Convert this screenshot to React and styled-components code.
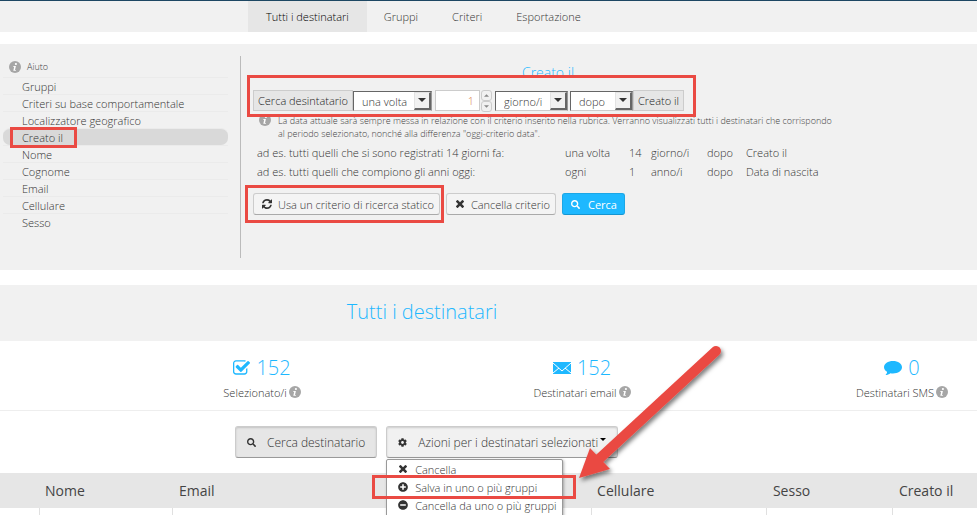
import React from "react";
import styled, { createGlobalStyle, css } from "styled-components";
import { FaSearch, FaCog, FaPlusCircle, FaMinusCircle } from "react-icons/fa";

// Styled Components

const GlobalStyle = createGlobalStyle`
  * {
    box-sizing: border-box;
  }
  body {
    margin: 0;
    overflow: hidden;
    background: #fff;
    color: #333;
    font-family: "Open Sans", "Liberation Sans", sans-serif;
    font-size: 11px;
    font-weight: 300;
  }
  button, input, select {
    font: inherit;
    color: inherit;
  }
  svg {
    display: block;
    flex: none;
  }
`;

const TopBar = styled.nav`
  display: flex;
  height: 32px;
  margin-bottom: 12px;
  padding-left: 248px;
  border-top: 1px solid #1d4763;
  background: #f1f1f1;
`;

const Tab = styled.a`
  display: flex;
  align-items: center;
  padding: 0 ${(props) => (props.$active ? "18px" : "17px")};
  text-decoration: none;
  color: ${(props) => (props.$active ? "#000" : "#333")};
  background: ${(props) => (props.$active ? "#e6e6e6" : "transparent")};
`;

const Panel = styled.section`
  display: flex;
  padding: 12px 0;
  background: #f1f1f1;
`;

const Sidebar = styled.aside`
  flex: none;
  width: 241px;
  padding: 0 12px 0 3px;
  border-right: 1px solid #bbb;
`;

const Help = styled.div`
  display: flex;
  align-items: center;
  gap: 6px;
  height: 21px;
  padding-left: 6px;
  font-size: 9px;
  color: #444;
`;

const CriteriaList = styled.ul`
  margin: 0;
  padding: 0 0 28px;
  list-style: none;
`;

const CriteriaItem = styled.li`
  display: flex;
  align-items: center;
  height: 17px;
  padding-left: 19px;
  border-top: 1px solid #ebebeb;
  border-radius: ${(props) => (props.$active ? "7px" : "0")};
  background: ${(props) => (props.$active ? "#d9d9d9" : "transparent")};

  a {
    color: #333;
    text-decoration: none;
  }
`;

// Red frame drawn over the marked element
const marked = css`
  position: relative;

  &::after {
    content: "";
    position: absolute;
    z-index: 5;
    inset: ${(props) => props.$frame};
    border: 3px solid #ea4a43;
    pointer-events: none;
  }
`;

const Marked = styled.div`
  ${marked}
`;

const Editor = styled.div`
  flex: 1;
  padding: 7px 12px 0;
`;

const EditorTitle = styled.h3`
  max-width: 590px;
  margin: 0;
  height: 27px;
  font-size: 14px;
  line-height: 20px;
  font-weight: 300;
  text-align: center;
  color: #1eb8ff;
`;

const CriteriaForm = styled.div`
  display: inline-flex;
  align-items: center;
  height: 21px;
  ${marked}
`;

const Addon = styled.span`
  display: flex;
  align-items: center;
  height: 21px;
  padding: 0 4px;
  border: 1px solid #ccc;
  background: #e6e6e6;
  color: #222;
`;

const SelectBox = styled.span`
  position: relative;
  display: flex;
  width: ${(props) => props.$width};
  height: 20px;
  margin-left: ${(props) => props.$gap || "0"};
  border: 1px solid #666;
  border-right-color: #999;
  border-bottom-color: #ccc;
  background: #fff;

  select {
    width: 100%;
    height: 18px;
    padding: 2px 18px 0 8px;
    border: 0;
    background: transparent;
    appearance: none;
    color: #333;
    line-height: 16px;
  }
`;

const SelectArrow = styled.span`
  position: absolute;
  top: 0;
  right: 0;
  display: flex;
  align-items: center;
  justify-content: center;
  width: 17px;
  height: 18px;
  border: 1px solid #e3e3e3;
  border-right: 2px solid #666;
  border-bottom: 2px solid #666;
  background: #f1f1f1;
  pointer-events: none;
`;

const NumberInput = styled.input`
  width: 45px;
  height: 21px;
  margin-left: 3px;
  padding: 0 5px;
  border: 1px solid #ccc;
  background: #fff;
  color: #d9824a;
  text-align: right;
`;

const Spinner = styled.span`
  display: flex;
  flex-direction: column;
  width: 11px;
  margin: 0 3px 0 1px;
`;

const SpinButton = styled.button`
  display: flex;
  align-items: center;
  justify-content: center;
  height: 11px;
  padding: 0;
  border: 1px solid #ccc;
  border-radius: 3px;
  background: #f1f1f1;
  color: #888;
`;

const Hint = styled.div`
  display: flex;
  gap: 7px;
  max-width: 590px;
  padding: 3px 0 0 6px;
  font-size: 9px;
  line-height: 13px;
  color: #444;

  p {
    margin: 0;
  }
`;

const Examples = styled.table`
  margin: 3px 0 12px 4px;
  border-collapse: collapse;

  td {
    height: 19px;
    padding: 0;
    white-space: nowrap;
  }
`;

const ExampleCell = styled.td`
  width: ${(props) => props.$width};
`;

const ButtonRow = styled.div`
  display: flex;
  gap: 6px;
`;

const Button = styled.button`
  display: flex;
  align-items: center;
  gap: ${(props) => (props.$primary ? "8px" : "6px")};
  height: 22px;
  padding: ${(props) => (props.$primary ? "0 7px 0 8px" : "0 5px 0 8px")};
  border: 1px solid ${(props) => (props.$primary ? "#1ca7e6" : "#ccc")};
  border-bottom-color: ${(props) => (props.$primary ? "#1595d0" : "#aaa")};
  border-radius: 3px;
  background: ${(props) => (props.$primary ? "#1eb8ff" : "#f4f4f4")};
  color: ${(props) => (props.$primary ? "#fff" : "#333")};
  font-weight: ${(props) => (props.$primary ? 400 : 300)};
  white-space: nowrap;
`;

const PageTitle = styled.h1`
  margin: 15px 0 0;
  padding: 0 133px 0 0;
  background: #f1f1f1;
  color: #1eb8ff;
  font-size: 20px;
  font-weight: 300;
  line-height: 54px;
  height: 56px;
  text-align: center;
`;

const Stats = styled.section`
  display: flex;
  justify-content: space-between;
  height: 70px;
  padding: 12px 25px 0 212px;
  border-bottom: 1px solid #eee;
`;

const Stat = styled.div`
  display: flex;
  flex-direction: column;
  align-items: center;
  width: 100px;
`;

const StatValue = styled.div`
  display: flex;
  align-items: center;
  gap: 6px;
  height: 29px;
  color: #1eb8ff;
  font-size: 20px;
`;

const StatLabel = styled.div`
  display: flex;
  align-items: center;
  gap: 2px;
  height: 20px;
  white-space: nowrap;
`;

const Toolbar = styled.section`
  display: flex;
  gap: 9px;
  padding: 15px 0 15px 235px;
`;

const ToolButton = styled.button`
  display: flex;
  align-items: center;
  gap: 11px;
  height: 32px;
  padding: 0 11px;
  border: 1px solid #ccc;
  border-bottom-color: #999;
  border-radius: 3px;
  background: ${(props) => (props.$pressed ? "#e6e6e6" : "#f1f1f1")};
  box-shadow: inset 0 1px 2px rgba(0, 0, 0, 0.15);
  color: #333;
  font-size: 12px;
  white-space: nowrap;
`;

const Caret = styled.span`
  margin: -6px 0 0 -9px;
  border: 3px solid transparent;
  border-top-color: #000;
  border-bottom: 0;
`;

const Dropdown = styled.div`
  position: relative;
`;

const Menu = styled.ul`
  position: absolute;
  z-index: 2;
  top: 33px;
  left: 0;
  width: 177px;
  margin: 0;
  padding: 0 0 8px;
  border: 1px solid #999;
  border-radius: 2px;
  background: #fff;
  box-shadow: 1px 1px 3px rgba(0, 0, 0, 0.3);
  list-style: none;
`;

const MenuItem = styled.li`
  ${(props) => props.$frame && marked}

  a {
    display: flex;
    align-items: center;
    gap: 7px;
    height: 18px;
    padding-left: 11px;
    color: #333;
    text-decoration: none;
    white-space: nowrap;
  }
`;

const Arrow = styled.svg`
  position: absolute;
  z-index: 6;
  top: -84px;
  left: 188px;
  overflow: visible;
  pointer-events: none;
`;

const Recipients = styled.table`
  width: 100%;
  table-layout: fixed;
  border-collapse: collapse;

  th {
    height: 35px;
    padding: 0 6px;
    background: #e6e6e6;
    color: #444;
    font-size: 14px;
    font-weight: 400;
    text-align: left;
  }

  td {
    height: 32px;
    padding: 0 6px;
  }

  td + td {
    border-left: 1px solid #e0e0e0;
  }
`;

const criteria = [
  "Gruppi",
  "Criteri su base comportamentale",
  "Localizzatore geografico",
  "Creato il",
  "Nome",
  "Cognome",
  "Email",
  "Cellulare",
  "Sesso",
];

const examples = [
  ["ad es. tutti quelli che si sono registrati 14 giorni fa:", "una volta", "14", "giorno/i", "dopo", "Creato il"],
  ["ad es. tutti quelli che compiono gli anni oggi:", "ogni", "1", "anno/i", "dopo", "Data di nascita"],
];

const exampleWidths = ["308px", "64px", "22px", "56px", "39px", "auto"];

const columns = [
  { name: "", width: "4%" },
  { name: "Nome", width: "13.7%" },
  { name: "Email", width: "42.8%" },
  { name: "Cellulare", width: "18%" },
  { name: "Sesso", width: "12.9%" },
  { name: "Creato il", width: "8.6%" },
];

// Icons

function InfoIcon() {
  return (
    <svg width="12" height="12" viewBox="0 0 12 12">
      <circle cx="6" cy="6" r="6" fill="#a6a6a6" />
      <circle cx="6.9" cy="3" r="1.1" fill="#fff" />
      <path d="M4.300 5h2.600l-.9 4h1l-.2.8H4.300L5.200 5.800H4.100z" fill="#fff" />
    </svg>
  );
}

function CheckIcon() {
  return (
    <svg width="17" height="15" viewBox="0 128 1664 1408" fill="currentColor">
      <path d="M1408 928v317q0 119-84.500 203.500t-203.500 84.500h-832q-119 0-203.500-84.500t-84.500-203.500v-832q0-119 84.500-203.500t203.500-84.500h832q63 0 117 25 15 7 18 23 3 17-9 29l-49 49q-10 10-23 10-3 0-9-2-23-6-45-6h-832q-66 0-113 47t-47 113v832q0 66 47 113t113 47h832q66 0 113-47t47-113v-254q0-13 9-22l64-64q10-10 23-10 6 0 12 3 20 8 20 29zm231-489l-814 814q-24 24-57 24t-57-24l-430-430q-24-24-24-57t24-57l110-110q24-24 57-24t57 24l263 263 647-647q24-24 57-24t57 24l110 110q24 24 24 57t-24 57z" />
    </svg>
  );
}

function RefreshIcon() {
  return (
    <svg width="10" height="10" viewBox="0 128 1536 1536" fill="currentColor">
      <path d="M1511 1056q0 5-1 7-64 268-268 434.500t-478 166.500q-146 0-282.500-55t-243.500-157l-129 129q-19 19-45 19t-45-19-19-45v-448q0-26 19-45t45-19h448q26 0 45 19t19 45-19 45l-137 137q71 66 161 102t187 36q134 0 250-65t186-179q11-17 53-117 8-23 30-23h192q13 0 22.500 9.500t9.500 22.500zm25-800v448q0 26-19 45t-45 19h-448q-26 0-45-19t-19-45 19-45l138-138q-148-137-349-137-134 0-250 65t-186 179q-11 17-53 117-8 23-30 23h-199q-13 0-22.500-9.500t-9.500-22.500v-7q65-268 270-434.500t480-166.500q146 0 284 55.500t245 156.500l130-129q19-19 45-19t45 19 19 45z" />
    </svg>
  );
}

function CrossIcon() {
  return (
    <svg width="10" height="8" viewBox="110 258 1188 1188" fill="currentColor">
      <path d="M1298 1214q0 40-28 68l-136 136q-28 28-68 28t-68-28l-294-294-294 294q-28 28-68 28t-68-28l-136-136q-28-28-28-68t28-68l294-294-294-294q-28-28-28-68t28-68l136-136q28-28 68-28t68 28l294 294 294-294q28-28 68-28t68 28l136 136q28 28 28 68t-28 68l-294 294 294 294q28 28 28 68z" />
    </svg>
  );
}

function MailIcon() {
  return (
    <svg width="18" height="12" viewBox="0 0 18 12">
      <rect width="18" height="12" fill="#1eb8ff" />
      <path d="M0 1l9 8 9-8M0 11l6-5M18 11l-6-5" fill="none" stroke="#fff" />
    </svg>
  );
}

function CommentIcon() {
  return (
    <svg width="18" height="14" viewBox="0 0 18 14" fill="currentColor">
      <path d="M9 0c5 0 9 2.700 9 6.200s-4 6.200-9 6.200c-.9 0-1.800-.1-2.600-.2C5 13.300 3.400 13.900 1.500 14c1-.9 1.500-1.900 1.600-3.200C1.200 9.700 0 8 0 6.200 0 2.700 4 0 9 0z" />
    </svg>
  );
}

function Triangle({ up, size = 5 }) {
  return (
    <svg width={size} height={size > 5 ? 4 : 3} viewBox="0 0 8 4" fill="currentColor">
      <path d={up ? "M0 4L4 0l4 4z" : "M0 0h8L4 4z"} />
    </svg>
  );
}

// Form parts

function Select({ label, value, options, width, gap }) {
  return (
    <SelectBox $width={width} $gap={gap}>
      <select aria-label={label} defaultValue={value}>
        {options.map((option) => (
          <option key={option}>{option}</option>
        ))}
      </select>
      <SelectArrow>
        <Triangle size={8} />
      </SelectArrow>
    </SelectBox>
  );
}

function CriteriaSidebar() {
  return (
    <Sidebar>
      <Help>
        <InfoIcon />
        Aiuto
      </Help>
      <CriteriaList>
        {criteria.map((name) => (
          <CriteriaItem key={name} $active={name === "Creato il"}>
            {name === "Creato il" ? (
              <Marked $frame="-3px -14px -3px -12px">
                <a href="#creato">{name}</a>
              </Marked>
            ) : (
              <a href="#criterio">{name}</a>
            )}
          </CriteriaItem>
        ))}
      </CriteriaList>
    </Sidebar>
  );
}

function CriteriaEditor() {
  return (
    <Editor>
      <EditorTitle>Creato il</EditorTitle>
      <CriteriaForm $frame="-15px -12px -6px -6px">
        <Addon>Cerca desintatario</Addon>
        <Select label="Frequenza" value="una volta" options={["una volta", "ogni"]} width="79px" />
        <NumberInput type="text" aria-label="Quantità" defaultValue="1" />
        <Spinner>
          <SpinButton aria-label="Aumenta">
            <Triangle up />
          </SpinButton>
          <SpinButton aria-label="Diminuisci">
            <Triangle />
          </SpinButton>
        </Spinner>
        <Select label="Periodo" value="giorno/i" options={["giorno/i", "anno/i"]} width="73px" />
        <Select label="Posizione" value="dopo" options={["dopo", "prima"]} width="63px" gap="2px" />
        <Addon>Creato il</Addon>
      </CriteriaForm>
      <Hint>
        <InfoIcon />
        <p>
          La data attuale sarà sempre messa in relazione con il criterio inserito nella rubrica.
          Verranno visualizzati tutti i destinatari che corrispondo
          <br />
          al periodo selezionato, nonché alla differenza "oggi-criterio data".
        </p>
      </Hint>
      <Examples>
        <tbody>
          {examples.map((row) => (
            <tr key={row[0]}>
              {row.map((cell, i) => (
                <ExampleCell key={i} $width={exampleWidths[i]}>
                  {cell}
                </ExampleCell>
              ))}
            </tr>
          ))}
        </tbody>
      </Examples>
      <ButtonRow>
        <Marked $frame="-8px -4px -8px -8px">
          <Button>
            <RefreshIcon />
            Usa un criterio di ricerca statico
          </Button>
        </Marked>
        <Button>
          <CrossIcon />
          Cancella criterio
        </Button>
        <Button $primary>
          <FaSearch size={9} />
          Cerca
        </Button>
      </ButtonRow>
    </Editor>
  );
}

function StatsRow() {
  return (
    <Stats>
      <Stat>
        <StatValue>
          <CheckIcon />
          152
        </StatValue>
        <StatLabel>
          Selezionato/i <InfoIcon />
        </StatLabel>
      </Stat>
      <Stat>
        <StatValue>
          <MailIcon />
          152
        </StatValue>
        <StatLabel>
          Destinatari email <InfoIcon />
        </StatLabel>
      </Stat>
      <Stat>
        <StatValue>
          <CommentIcon />0
        </StatValue>
        <StatLabel>
          Destinatari SMS <InfoIcon />
        </StatLabel>
      </Stat>
    </Stats>
  );
}

function ActionsMenu() {
  return (
    <Dropdown>
      <ToolButton aria-expanded="true">
        <FaCog size={9} />
        Azioni per i destinatari selezionati
        <Caret />
      </ToolButton>
      <Menu>
        <MenuItem>
          <a href="#cancella">
            <CrossIcon />
            Cancella
          </a>
        </MenuItem>
        <MenuItem $frame="-3px -14px -3px -15px">
          <a href="#salva">
            <FaPlusCircle size={10} />
            Salva in uno o più gruppi
          </a>
        </MenuItem>
        <MenuItem>
          <a href="#cancella-gruppi">
            <FaMinusCircle size={10} />
            Cancella da uno o più gruppi
          </a>
        </MenuItem>
      </Menu>
      <Arrow width="152" height="140" viewBox="0 0 152 140">
        <defs>
          <filter id="shadow" x="-10%" y="-10%" width="130%" height="130%">
            <feDropShadow dx="2" dy="3" stdDeviation="2" floodOpacity="0.5" />
          </filter>
        </defs>
        <g filter="url(#shadow)" fill="#ea4a43">
          <path d="M142 9L25 117" stroke="#ea4a43" strokeWidth="10" strokeLinecap="round" />
          <path d="M5 136L16 106l20 21z" />
        </g>
      </Arrow>
    </Dropdown>
  );
}

function App() {
  return (
    <>
      <GlobalStyle />
      <TopBar>
        <Tab href="#tutti" $active>
          Tutti i destinatari
        </Tab>
        <Tab href="#gruppi">Gruppi</Tab>
        <Tab href="#criteri">Criteri</Tab>
        <Tab href="#esportazione">Esportazione</Tab>
      </TopBar>
      <Panel>
        <CriteriaSidebar />
        <CriteriaEditor />
      </Panel>
      <PageTitle>Tutti i destinatari</PageTitle>
      <StatsRow />
      <Toolbar>
        <ToolButton $pressed>
          <FaSearch size={9} />
          Cerca destinatario
        </ToolButton>
        <ActionsMenu />
      </Toolbar>
      <Recipients>
        <colgroup>
          {columns.map((column) => (
            <col key={column.name} style={{ width: column.width }} />
          ))}
        </colgroup>
        <thead>
          <tr>
            {columns.map((column) => (
              <th key={column.name}>{column.name}</th>
            ))}
          </tr>
        </thead>
        <tbody>
          <tr>
            {columns.map((column) => (
              <td key={column.name} />
            ))}
          </tr>
        </tbody>
      </Recipients>
    </>
  );
}

export default App;
